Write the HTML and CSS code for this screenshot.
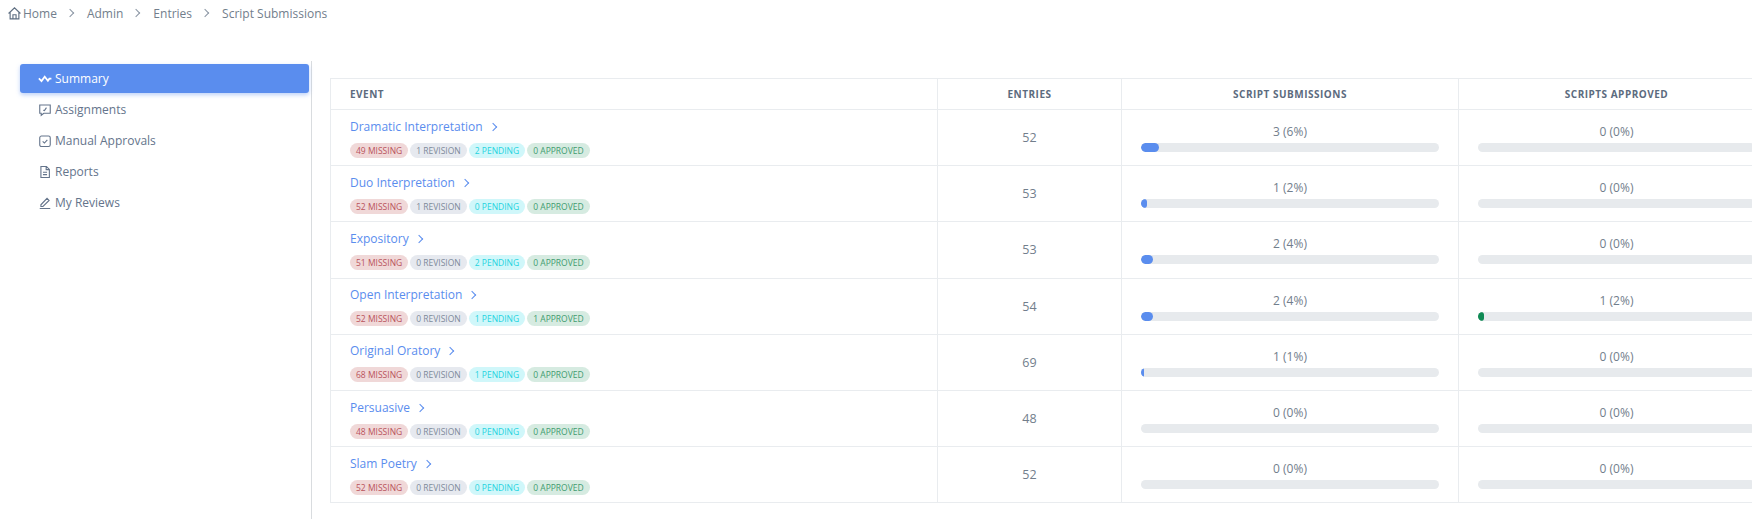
FILE: index.html
```html
<!DOCTYPE html>
<html lang="en">
<head>
  <meta charset="UTF-8">
  <title>Script Submissions</title>
  <link rel="stylesheet" href="styles.css">
</head>
<body>
<nav class="breadcrumb">
  <svg class="home-icon" viewBox="0 0 24 24"><path d="M2.500 12 12 3l9.500 9M5 10v10.500h14V10M9.500 20.500V14h5v6.500"/></svg>
  <span>Home</span><i class="crumb-sep"></i>
  <span>Admin</span><i class="crumb-sep"></i>
  <span>Entries</span><i class="crumb-sep"></i>
  <span>Script Submissions</span>
</nav>
<div class="layout">
  <aside class="sidebar">
    <a class="nav-item active">
      <svg class="pulse" viewBox="0 0 24 24"><path d="M1.500 11 6 15.500 11.500 8l5.500 7 2.500-3.500H23"/></svg>Summary
    </a>
    <a class="nav-item">
      <svg viewBox="0 0 24 24"><path d="M3 3.500h18v14H10l-4.500 3.500v-3.500H3zM9 12.500l2 .5 3.500-5"/></svg>Assignments
    </a>
    <a class="nav-item">
      <svg viewBox="0 0 24 24"><rect x="3" y="3.500" width="18" height="18" rx="3"/><path d="m8 12.500 3 3 5-5.500"/></svg>Manual Approvals
    </a>
    <a class="nav-item">
      <svg viewBox="0 0 24 24"><path d="M5 2.500h9.500l5 5v14H5zM14 3v5h5M8.500 12.500h7M8.500 16.500h7"/></svg>Reports
    </a>
    <a class="nav-item">
      <svg viewBox="0 0 24 24"><path d="M5 15 15.500 4l3.500 3.500L8.500 18H5zM3 21.500h18"/></svg>My Reviews
    </a>
  </aside>
  <main class="content">
    <table class="summary-table">
      <thead>
        <tr>
          <th class="col-event">Event</th>
          <th class="col-entries">Entries</th>
          <th class="col-sub">Script Submissions</th>
          <th class="col-app">Scripts Approved</th>
        </tr>
      </thead>
      <tbody>
        <tr>
          <td class="event"><a class="event-link">Dramatic Interpretation<i class="chev"></i></a>
            <div class="badges"><span class="badge red">49 Missing</span><span class="badge gray">1 Revision</span><span class="badge cyan">2 Pending</span><span class="badge green">0 Approved</span></div></td>
          <td class="num">52</td>
          <td class="prog"><div class="prog-label">3 (6%)</div><div class="bar"><div class="fill" style="width: 6%"></div></div></td>
          <td class="prog"><div class="prog-label">0 (0%)</div><div class="bar"></div></td>
        </tr>
        <tr>
          <td class="event"><a class="event-link">Duo Interpretation<i class="chev"></i></a>
            <div class="badges"><span class="badge red">52 Missing</span><span class="badge gray">1 Revision</span><span class="badge cyan">0 Pending</span><span class="badge green">0 Approved</span></div></td>
          <td class="num">53</td>
          <td class="prog"><div class="prog-label">1 (2%)</div><div class="bar"><div class="fill" style="width: 2%"></div></div></td>
          <td class="prog"><div class="prog-label">0 (0%)</div><div class="bar"></div></td>
        </tr>
        <tr>
          <td class="event"><a class="event-link">Expository<i class="chev"></i></a>
            <div class="badges"><span class="badge red">51 Missing</span><span class="badge gray">0 Revision</span><span class="badge cyan">2 Pending</span><span class="badge green">0 Approved</span></div></td>
          <td class="num">53</td>
          <td class="prog"><div class="prog-label">2 (4%)</div><div class="bar"><div class="fill" style="width: 4%"></div></div></td>
          <td class="prog"><div class="prog-label">0 (0%)</div><div class="bar"></div></td>
        </tr>
        <tr>
          <td class="event"><a class="event-link">Open Interpretation<i class="chev"></i></a>
            <div class="badges"><span class="badge red">52 Missing</span><span class="badge gray">0 Revision</span><span class="badge cyan">1 Pending</span><span class="badge green">1 Approved</span></div></td>
          <td class="num">54</td>
          <td class="prog"><div class="prog-label">2 (4%)</div><div class="bar"><div class="fill" style="width: 4%"></div></div></td>
          <td class="prog"><div class="prog-label">1 (2%)</div><div class="bar"><div class="fill fill-green" style="width: 2%"></div></div></td>
        </tr>
        <tr>
          <td class="event"><a class="event-link">Original Oratory<i class="chev"></i></a>
            <div class="badges"><span class="badge red">68 Missing</span><span class="badge gray">0 Revision</span><span class="badge cyan">1 Pending</span><span class="badge green">0 Approved</span></div></td>
          <td class="num">69</td>
          <td class="prog"><div class="prog-label">1 (1%)</div><div class="bar"><div class="fill" style="width: 1%"></div></div></td>
          <td class="prog"><div class="prog-label">0 (0%)</div><div class="bar"></div></td>
        </tr>
        <tr>
          <td class="event"><a class="event-link">Persuasive<i class="chev"></i></a>
            <div class="badges"><span class="badge red">48 Missing</span><span class="badge gray">0 Revision</span><span class="badge cyan">0 Pending</span><span class="badge green">0 Approved</span></div></td>
          <td class="num">48</td>
          <td class="prog"><div class="prog-label">0 (0%)</div><div class="bar"></div></td>
          <td class="prog"><div class="prog-label">0 (0%)</div><div class="bar"></div></td>
        </tr>
        <tr>
          <td class="event"><a class="event-link">Slam Poetry<i class="chev"></i></a>
            <div class="badges"><span class="badge red">52 Missing</span><span class="badge gray">0 Revision</span><span class="badge cyan">0 Pending</span><span class="badge green">0 Approved</span></div></td>
          <td class="num">52</td>
          <td class="prog"><div class="prog-label">0 (0%)</div><div class="bar"></div></td>
          <td class="prog"><div class="prog-label">0 (0%)</div><div class="bar"></div></td>
        </tr>
      </tbody>
    </table>
  </main>
</div>
</body>
</html>
```

FILE: styles.css
```css
html, body {
  height: 100%;
}
body {
  margin: 0;
  font-family: 'Open Sans', sans-serif;
  font-size: 12px;
  color: #727e8c;
  background: #fff;
  overflow: hidden;
  display: flex;
  flex-direction: column;
}
.breadcrumb {
  display: flex;
  align-items: center;
  height: 26px;
  padding-left: 7px;
  color: #727e8c;
}
.home-icon {
  width: 15px;
  height: 15px;
  margin-right: 1px;
  fill: none;
  stroke: #5f6f82;
  stroke-width: 1.800;
}
.crumb-sep {
  width: 5px;
  height: 5px;
  margin: 0 14px 0 10px;
  border-top: 1px solid #8a95a3;
  border-right: 1px solid #8a95a3;
  transform: rotate(45deg);
}
.layout {
  flex: 1;
  display: flex;
  margin-top: 35px;
  min-height: 0;
}
.sidebar {
  box-sizing: border-box;
  width: 312px;
  flex-shrink: 0;
  padding: 3px 2px 0 20px;
  border-right: 1px solid #d9dcdf;
}
.nav-item {
  display: flex;
  align-items: center;
  height: 31px;
  padding-left: 18px;
  box-sizing: border-box;
  color: #64748b;
  border-radius: 3px;
}
.nav-item svg {
  width: 14px;
  height: 14px;
  margin-right: 3px;
  fill: none;
  stroke: currentColor;
  stroke-width: 1.900;
}
.nav-item svg.pulse {
  stroke-width: 3;
}
.nav-item.active {
  height: 29px;
  margin-bottom: 1px;
  background: #5a8dee;
  color: #fff;
  box-shadow: 0 2px 4px rgba(90, 141, 238, 0.4);
}
.content {
  padding: 17px 0 0 18px;
}
.summary-table {
  table-layout: fixed;
  width: 1442px;
  border-collapse: collapse;
  border: 1px solid #e9ecef;
}
.summary-table th, .summary-table td {
  border: 1px solid #e9ecef;
  padding: 0 19px;
}
.summary-table th {
  height: 30px;
  font-size: 10px;
  font-weight: 700;
  letter-spacing: 0.5px;
  text-transform: uppercase;
  text-align: center;
  color: #5c6b7e;
}
.summary-table th.col-event {
  text-align: left;
}
.col-event { width: 568px; }
.col-entries { width: 145px; }
.col-sub { width: 298px; }
.col-app { width: 277px; }
.summary-table td {
  height: 55.200px;
}
.summary-table td.event {
  height: 53.200px;
  padding-top: 2px;
}
.event-link {
  display: block;
  color: #5a8dee;
  line-height: 18px;
  margin-top: -2px;
}
.chev {
  display: inline-block;
  width: 5px;
  height: 5px;
  margin-left: 7px;
  border-top: 1.500px solid #5a8dee;
  border-right: 1.500px solid #5a8dee;
  transform: translateY(-1px) rotate(45deg);
}
.badges {
  display: flex;
  gap: 2px;
  margin-top: 7px;
}
.badge {
  height: 15px;
  line-height: 15px;
  padding: 0 6px;
  border-radius: 8px;
  font-size: 8.500px;
  text-transform: uppercase;
  white-space: nowrap;
}
.red { background: #f0d8d8; color: #b9525b; }
.gray { background: #e6e9ef; color: #7d8a9a; }
.cyan { background: #d0f7fa; color: #1fd3de; }
.green { background: #d6ebe1; color: #3f9c70; }
.num {
  text-align: center;
  font-size: 12.500px;
}
.prog-label {
  text-align: center;
  line-height: 18px;
}
.bar {
  height: 9px;
  margin-top: 2px;
  background: #e7eaed;
  border-radius: 5px;
  overflow: hidden;
}
.fill {
  height: 100%;
  background: #5a8dee;
  border-radius: 5px;
}
.fill-green {
  background: #0f8a54;
}
```
